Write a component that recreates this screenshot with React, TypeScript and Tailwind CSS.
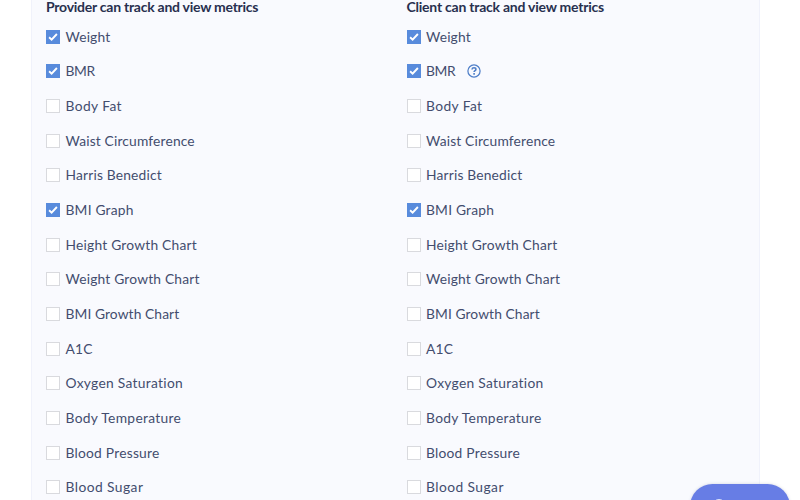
type Metric = { label: string; tracking: string; checked?: boolean };

const metrics: Metric[] = [
  { label: 'Weight', tracking: 'tracking-[0.17px]', checked: true },
  { label: 'BMR', tracking: 'tracking-[-0.35px]', checked: true },
  { label: 'Body Fat', tracking: 'tracking-[0.4px]' },
  { label: 'Waist Circumference', tracking: 'tracking-[0.16px]' },
  { label: 'Harris Benedict', tracking: 'tracking-[0.17px]' },
  { label: 'BMI Graph', tracking: 'tracking-[0.2px]', checked: true },
  { label: 'Height Growth Chart', tracking: 'tracking-[0.21px]' },
  { label: 'Weight Growth Chart', tracking: 'tracking-[0.19px]' },
  { label: 'BMI Growth Chart', tracking: 'tracking-[0.09px]' },
  { label: 'A1C', tracking: 'tracking-[0.2px]' },
  { label: 'Oxygen Saturation', tracking: 'tracking-[0.3px]' },
  { label: 'Body Temperature', tracking: 'tracking-[0.31px]' },
  { label: 'Blood Pressure', tracking: 'tracking-[0.23px]' },
  { label: 'Blood Sugar', tracking: 'tracking-[0.44px]' },
];

function Checkbox({ checked }: { checked?: boolean }) {
  return (
    <span
      role="checkbox"
      aria-checked={!!checked}
      className={
        checked
          ? 'flex size-[14px] shrink-0 items-center justify-center bg-[#588bdc]'
          : 'size-[14px] shrink-0 border border-[#d9dade] bg-white'
      }
    >
      {checked && (
        <svg viewBox="0 0 14 14" className="size-[14px]" fill="none" stroke="white" strokeWidth="1.9">
          <path d="M3.1 7.3 5.6 9.6 10.9 4" />
        </svg>
      )}
    </span>
  );
}

function HelpIcon() {
  return (
    <svg viewBox="0 0 14 14" className="ml-[11.2px] size-[14px] shrink-0" fill="none" stroke="#4f7fc8">
      <circle cx="7" cy="7" r="6.1" strokeWidth="1.25" />
      <path d="M5 5.5C5.1 4.3 6 3.8 7 3.8s1.9.6 1.9 1.6c0 1.3-1.8 1.3-1.8 2.7" strokeWidth="1.6" />
      <path d="M7.1 9.1v1.6" strokeWidth="1.6" />
    </svg>
  );
}

function MetricColumn({ title, titleClass, help }: { title: string; titleClass: string; help?: string }) {
  return (
    <section className="w-[360.5px] shrink-0">
      <h2 className={`h-[19.5px] whitespace-nowrap text-[14px] leading-[14px] font-bold text-[#28304f] ${titleClass}`}>
        {title}
      </h2>
      <ul>
        {metrics.map((m) => (
          <li key={m.label} className="flex h-[34.67px] items-center">
            <Checkbox checked={m.checked} />
            <span className={`ml-[5.5px] whitespace-nowrap text-[13.8px] leading-[20px] text-[#434d6e] ${m.tracking}`}>
              {m.label}
            </span>
            {help === m.label && <HelpIcon />}
          </li>
        ))}
      </ul>
    </section>
  );
}

export default function App() {
  return (
    <div className="relative h-[500px] w-[800px] overflow-hidden bg-white pl-[31px] font-['Lato','Liberation_Sans',sans-serif]">
      <main className="flex h-[500px] w-[729px] overflow-hidden border-x border-x-[#f0f2fb] bg-[#f9fafe] pl-[14px]">
        <MetricColumn title="Provider can track and view metrics" titleClass="tracking-[-0.25px]" />
        <MetricColumn title="Client can track and view metrics" titleClass="tracking-[-0.23px]" help="BMR" />
      </main>
      <button
        aria-label="Help"
        className="absolute top-[483.5px] left-[690px] h-[45px] w-[100px] rounded-full bg-[#677de5] shadow-[0_0_3px_rgba(80,90,140,0.25)]"
      >
        <span className="absolute top-[15.5px] left-[21.5px] size-[14px] rounded-full border-[1.5px] border-white/80" />
      </button>
    </div>
  );
}
